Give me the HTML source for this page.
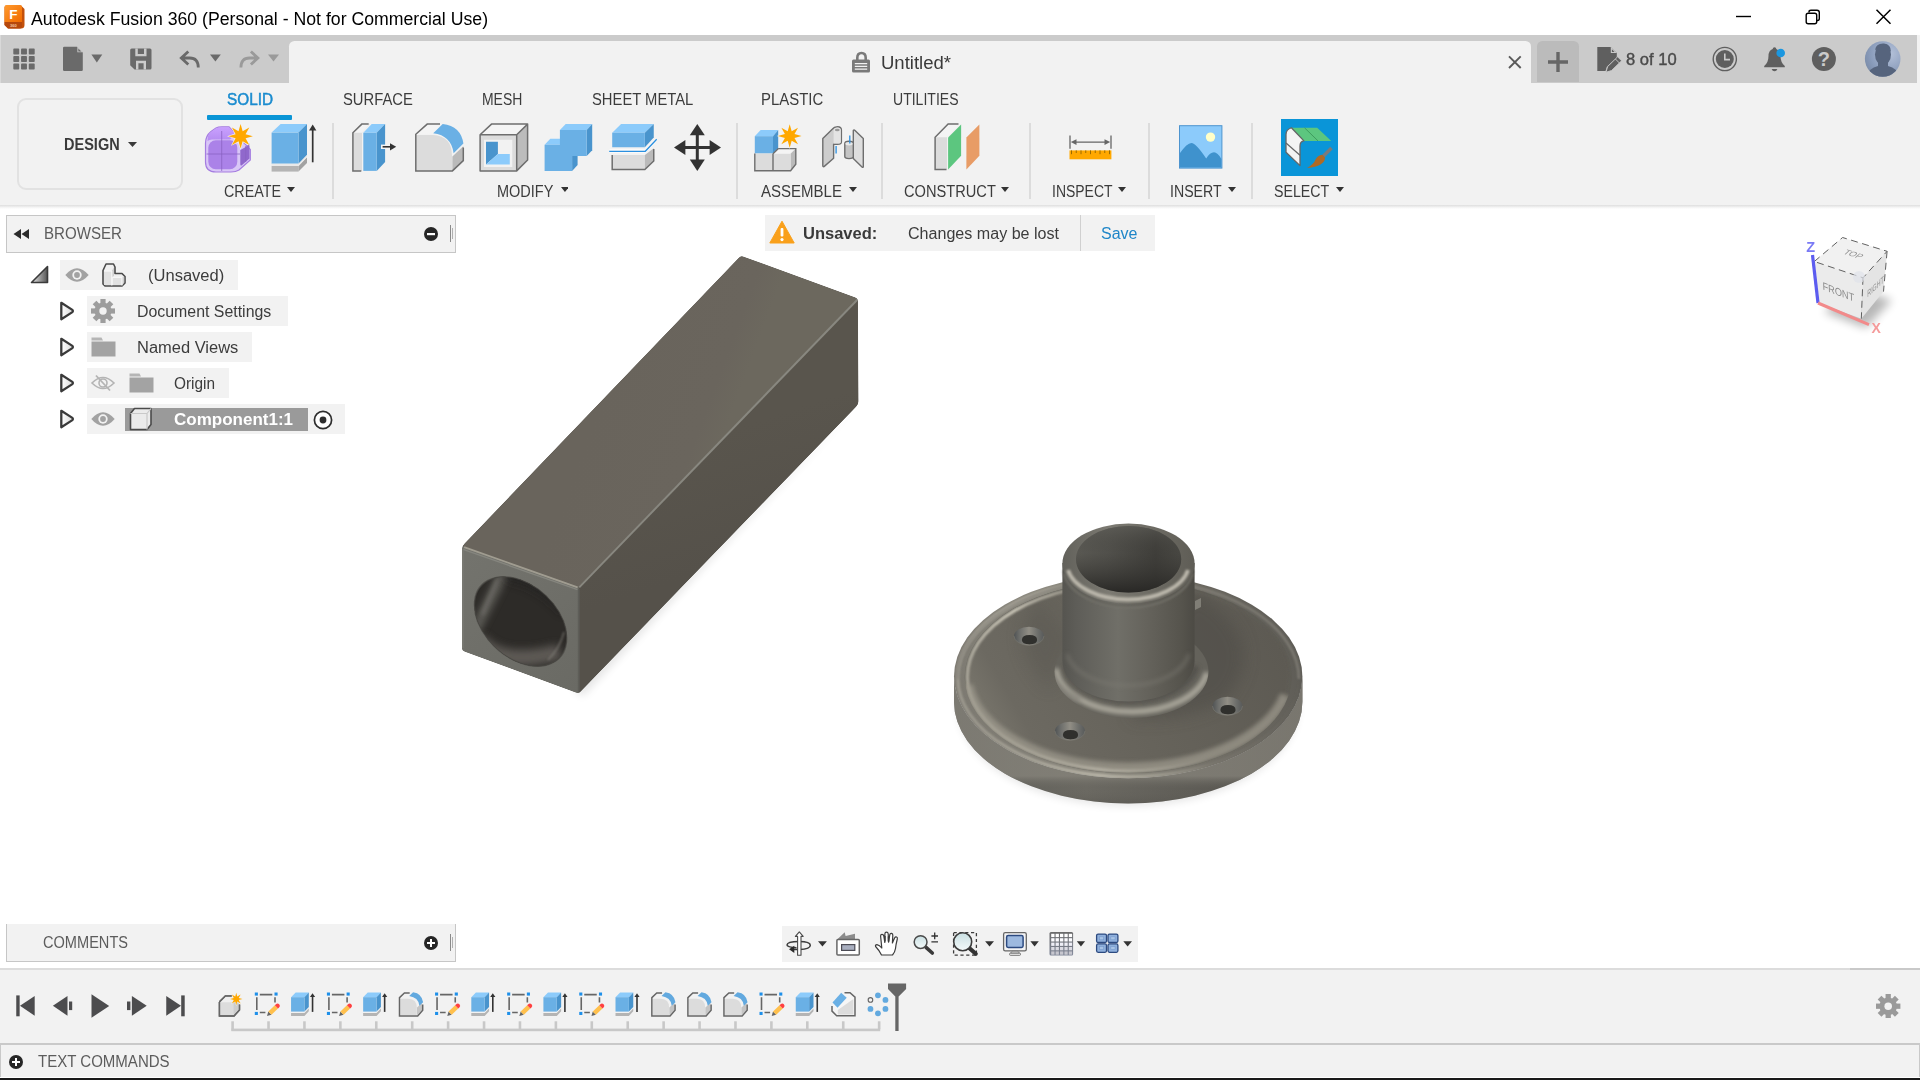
<!DOCTYPE html>
<html><head><meta charset="utf-8"><title>Autodesk Fusion 360</title>
<style>
html,body{margin:0;padding:0;}
body{width:1920px;height:1080px;position:relative;overflow:hidden;background:#fff;font-family:"Liberation Sans",sans-serif;}
.a{position:absolute;display:block;}
.t{position:absolute;display:block;white-space:nowrap;transform-origin:0 0;}
</style></head><body>
<span class="t" style="left:31.00px;top:9.76px;font-size:18px;line-height:18px;color:#000;transform:scaleX(0.9825);">Autodesk Fusion 360 (Personal - Not for Commercial Use)</span>
<div class="a" style="left:0px;top:35px;width:1917px;height:48px;background:#cbcbcb;"></div>
<div class="a" style="left:1917px;top:35px;width:3px;height:48px;background:#f2f2f2;"></div>
<div class="a" style="left:0px;top:35px;width:1px;height:47.5px;background:#d9d9d9;"></div>
<div class="a" style="left:289.2px;top:40.8px;width:1242.3px;height:42.2px;background:#f2f2f2;border-radius:5.5px 5.5px 0 0;"></div>
<div class="a" style="left:1537px;top:40.8px;width:42px;height:41.7px;background:#bbbbbb;border-radius:5.5px 5.5px 0 0;"></div>
<div class="a" style="left:0px;top:82.5px;width:1920px;height:122.5px;background:#f2f2f2;"></div>
<div class="a" style="left:0px;top:205px;width:1920px;height:4px;background:linear-gradient(#dedede,#f4f4f4 60%,#fff);"></div>
<span class="t" style="left:880.80px;top:54.06px;font-size:18px;line-height:18px;color:#3a3a3a;transform:scaleX(1.0289);">Untitled*</span>
<span class="t" style="left:1626.00px;top:51.33px;font-size:16.5px;line-height:16.5px;color:#4a4a4a;transform:scaleX(1.0029);-webkit-text-stroke:0.4px #4a4a4a;">8 of 10</span>
<div class="a" style="left:17px;top:98px;width:162px;height:88px;border:2px solid #e2e2e2;border-radius:9px;"></div>
<span class="t" style="left:63.75px;top:136.76px;font-size:16px;line-height:16px;color:#3a3a3a;font-weight:700;transform:scaleX(0.9072);">DESIGN</span>
<span class="t" style="left:227.00px;top:91.76px;font-size:16px;line-height:16px;color:#1b8ccf;transform:scaleX(0.9580);-webkit-text-stroke:0.5px #1b8ccf;">SOLID</span>
<div class="a" style="left:207px;top:115px;width:85px;height:4.5px;background:#0a95d6;border-radius:1px;"></div>
<span class="t" style="left:342.50px;top:91.76px;font-size:16px;line-height:16px;color:#3c3c3c;transform:scaleX(0.9236);">SURFACE</span>
<span class="t" style="left:482.20px;top:91.76px;font-size:16px;line-height:16px;color:#3c3c3c;transform:scaleX(0.8718);">MESH</span>
<span class="t" style="left:591.50px;top:91.76px;font-size:16px;line-height:16px;color:#3c3c3c;transform:scaleX(0.9238);">SHEET METAL</span>
<span class="t" style="left:761.30px;top:91.76px;font-size:16px;line-height:16px;color:#3c3c3c;transform:scaleX(0.9327);">PLASTIC</span>
<span class="t" style="left:892.50px;top:91.76px;font-size:16px;line-height:16px;color:#3c3c3c;transform:scaleX(0.8771);">UTILITIES</span>
<span class="t" style="left:224.00px;top:183.56px;font-size:16px;line-height:16px;color:#3c3c3c;transform:scaleX(0.8946);">CREATE</span>
<svg class="a" style="left:287px;top:187.3px;" width="8" height="5" viewBox="0 0 8 5"><path d="M0 0H8 L4 5Z" fill="#333"/></svg>
<span class="t" style="left:497.20px;top:183.56px;font-size:16px;line-height:16px;color:#3c3c3c;transform:scaleX(0.9049);">MODIFY</span>
<svg class="a" style="left:560.6px;top:187.3px;" width="7.9" height="5" viewBox="0 0 7.9 5"><path d="M0 0H7.9 L3.95 5Z" fill="#333"/></svg>
<span class="t" style="left:761.30px;top:183.56px;font-size:16px;line-height:16px;color:#3c3c3c;transform:scaleX(0.9390);">ASSEMBLE</span>
<svg class="a" style="left:848.5px;top:187.3px;" width="8" height="5" viewBox="0 0 8 5"><path d="M0 0H8 L4 5Z" fill="#333"/></svg>
<span class="t" style="left:903.75px;top:183.56px;font-size:16px;line-height:16px;color:#3c3c3c;transform:scaleX(0.9145);">CONSTRUCT</span>
<svg class="a" style="left:1001px;top:187.3px;" width="8" height="5" viewBox="0 0 8 5"><path d="M0 0H8 L4 5Z" fill="#333"/></svg>
<span class="t" style="left:1052.20px;top:183.56px;font-size:16px;line-height:16px;color:#3c3c3c;transform:scaleX(0.8732);">INSPECT</span>
<svg class="a" style="left:1118.4px;top:187.3px;" width="8" height="5" viewBox="0 0 8 5"><path d="M0 0H8 L4 5Z" fill="#333"/></svg>
<span class="t" style="left:1170.30px;top:183.56px;font-size:16px;line-height:16px;color:#3c3c3c;transform:scaleX(0.8838);">INSERT</span>
<svg class="a" style="left:1227.5px;top:187.3px;" width="8" height="5" viewBox="0 0 8 5"><path d="M0 0H8 L4 5Z" fill="#333"/></svg>
<span class="t" style="left:1274.00px;top:183.56px;font-size:16px;line-height:16px;color:#3c3c3c;transform:scaleX(0.8885);">SELECT</span>
<svg class="a" style="left:1335.5px;top:187.3px;" width="8" height="5" viewBox="0 0 8 5"><path d="M0 0H8 L4 5Z" fill="#333"/></svg>
<svg class="a" style="left:128px;top:142px;" width="9" height="5" viewBox="0 0 9 5"><path d="M0 0H9 L4.5 5Z" fill="#3a3a3a"/></svg>
<div class="a" style="left:332px;top:123px;width:2px;height:76px;background:#dcdcdc;"></div>
<div class="a" style="left:735.5px;top:123px;width:2px;height:76px;background:#dcdcdc;"></div>
<div class="a" style="left:881px;top:123px;width:2px;height:76px;background:#dcdcdc;"></div>
<div class="a" style="left:1029.25px;top:123px;width:2px;height:76px;background:#dcdcdc;"></div>
<div class="a" style="left:1147.75px;top:123px;width:2px;height:76px;background:#dcdcdc;"></div>
<div class="a" style="left:1251.25px;top:123px;width:2px;height:76px;background:#dcdcdc;"></div>
<div class="a" style="left:6px;top:215px;width:448px;height:36px;border:1px solid #c6c6c6;background:#f2f2f2;"></div>
<span class="t" style="left:43.75px;top:225.71px;font-size:16px;line-height:16px;color:#5c5c5c;transform:scaleX(0.9435);">BROWSER</span>
<svg class="a" style="left:13px;top:229px;" width="17" height="10" viewBox="0 0 17 10"><path d="M8 0V10L0.5 5Z M16 0V10L8.5 5Z" fill="#2b2b2b"/></svg>
<svg class="a" style="left:424px;top:226.5px;" width="14" height="14" viewBox="0 0 14 14"><circle cx="7" cy="7" r="7" fill="#262626"/><rect x="3" y="6" width="8" height="2.2" fill="#fff"/></svg>
<div class="a" style="left:449.5px;top:225px;width:1.2px;height:17px;background:#8a8a8a;"></div>
<div class="a" style="left:452px;top:228px;width:1px;height:11px;background:#b0b0b0;"></div>
<svg class="a" style="left:30px;top:265px;" width="19" height="19" viewBox="0 0 19 19"><defs><linearGradient id="tg" x1="0" y1="0" x2="1" y2="0"><stop offset="0" stop-color="#e8e8e8"/><stop offset="1" stop-color="#555"/></linearGradient></defs><path d="M1.5 17.5 H17.5 V1.5Z" fill="url(#tg)" stroke="#3a3a3a" stroke-width="1.6" stroke-linejoin="round"/></svg>
<div class="a" style="left:60px;top:260px;width:178px;height:30px;background:#f2f2f2;"></div>
<svg class="a" style="left:64.5px;top:267px;" width="24" height="16" viewBox="0 0 24 16"><path d="M0.3 8 Q12 -5.5 23.7 8 Q12 21.5 0.3 8Z" fill="#a2a2a2"/><circle cx="12" cy="8" r="4.7" fill="#f2f2f2"/><circle cx="12" cy="8" r="2.9" fill="#a2a2a2"/></svg>
<svg class="a" style="left:101px;top:262px;" width="26" height="26" viewBox="0 0 26 26"><path d="M2 8.5 L5 2 H12.5 L14 5 V11.5 H21 L24 14.5 V21 L21 24 H4 L2 22Z" fill="#f0f0f0" stroke="#4a4a4a" stroke-width="1.6" stroke-linejoin="round"/><path d="M3 9.3H10.6V23 H3Z M12 15.6H20.8V23H12Z" fill="#e2e2e2"/><path d="M10.8 9 L13 5.3 V14 L10.8 15.5Z M21 15.5 L23.2 14.8 V20.5 L21 23Z" fill="#cfcfcf"/><path d="M3 9H10.8V23.5 M11.5 15.3H21V23.5" fill="none" stroke="#fafafa" stroke-width="1"/></svg>
<span class="t" style="left:147.50px;top:268.36px;font-size:16px;line-height:16px;color:#3c3c3c;transform:scaleX(1.0332);">(Unsaved)</span>
<svg class="a" style="left:58.5px;top:301px;" width="16" height="20" viewBox="0 0 16 20"><defs><linearGradient id="tcg" x1="0" y1="0" x2="1" y2="0"><stop offset="0" stop-color="#fff"/><stop offset="1" stop-color="#d8d8d8"/></linearGradient></defs><path d="M2.3 1.8 L13 8.6 Q14.8 10 13 11.4 L2.3 18.2Z" fill="url(#tcg)" stroke="#3a3a3a" stroke-width="2.3" stroke-linejoin="round"/></svg>
<div class="a" style="left:87px;top:296px;width:201px;height:30px;background:#f2f2f2;"></div>
<svg class="a" style="left:91px;top:299px;" width="24" height="24" viewBox="0 0 24 24"><g transform="translate(12 12)" fill="#9d9d9d"><circle r="8.6"/><rect x="-2.6" y="-12" width="5.2" height="6" transform="rotate(0)"/><rect x="-2.6" y="-12" width="5.2" height="6" transform="rotate(45)"/><rect x="-2.6" y="-12" width="5.2" height="6" transform="rotate(90)"/><rect x="-2.6" y="-12" width="5.2" height="6" transform="rotate(135)"/><rect x="-2.6" y="-12" width="5.2" height="6" transform="rotate(180)"/><rect x="-2.6" y="-12" width="5.2" height="6" transform="rotate(225)"/><rect x="-2.6" y="-12" width="5.2" height="6" transform="rotate(270)"/><rect x="-2.6" y="-12" width="5.2" height="6" transform="rotate(315)"/><circle r="3.7" fill="#f2f2f2"/></g></svg>
<span class="t" style="left:136.75px;top:304.36px;font-size:16px;line-height:16px;color:#3c3c3c;transform:scaleX(0.9932);">Document Settings</span>
<svg class="a" style="left:58.5px;top:337px;" width="16" height="20" viewBox="0 0 16 20"><defs><linearGradient id="tcg" x1="0" y1="0" x2="1" y2="0"><stop offset="0" stop-color="#fff"/><stop offset="1" stop-color="#d8d8d8"/></linearGradient></defs><path d="M2.3 1.8 L13 8.6 Q14.8 10 13 11.4 L2.3 18.2Z" fill="url(#tcg)" stroke="#3a3a3a" stroke-width="2.3" stroke-linejoin="round"/></svg>
<div class="a" style="left:87px;top:332px;width:165px;height:30px;background:#f2f2f2;"></div>
<svg class="a" style="left:91px;top:337px;" width="25" height="20" viewBox="0 0 25 20"><path d="M0.5 0.5H10.5L12 3.5H0.5Z" fill="#b5b5b5"/><rect x="0.5" y="4.5" width="24" height="15" fill="#a3a3a3"/></svg>
<span class="t" style="left:136.75px;top:340.36px;font-size:16px;line-height:16px;color:#3c3c3c;transform:scaleX(1.0289);">Named Views</span>
<svg class="a" style="left:58.5px;top:373px;" width="16" height="20" viewBox="0 0 16 20"><defs><linearGradient id="tcg" x1="0" y1="0" x2="1" y2="0"><stop offset="0" stop-color="#fff"/><stop offset="1" stop-color="#d8d8d8"/></linearGradient></defs><path d="M2.3 1.8 L13 8.6 Q14.8 10 13 11.4 L2.3 18.2Z" fill="url(#tcg)" stroke="#3a3a3a" stroke-width="2.3" stroke-linejoin="round"/></svg>
<div class="a" style="left:87px;top:368px;width:142px;height:30px;background:#f2f2f2;"></div>
<svg class="a" style="left:91px;top:374px;" width="24" height="18" viewBox="0 0 24 18"><path d="M1 9 Q12 -2 23 9 Q12 20 1 9Z" fill="none" stroke="#b4b4b4" stroke-width="1.6"/><circle cx="12" cy="9" r="4" fill="none" stroke="#b4b4b4" stroke-width="1.6"/><path d="M5 1.5 L19 16.5" stroke="#b4b4b4" stroke-width="1.8"/></svg>
<svg class="a" style="left:128.5px;top:373px;" width="25" height="20" viewBox="0 0 25 20"><path d="M0.5 0.5H10.5L12 3.5H0.5Z" fill="#b5b5b5"/><rect x="0.5" y="4.5" width="24" height="15" fill="#a3a3a3"/></svg>
<span class="t" style="left:174.00px;top:376.36px;font-size:16px;line-height:16px;color:#3c3c3c;transform:scaleX(0.9607);">Origin</span>
<svg class="a" style="left:58.5px;top:409px;" width="16" height="20" viewBox="0 0 16 20"><defs><linearGradient id="tcg" x1="0" y1="0" x2="1" y2="0"><stop offset="0" stop-color="#fff"/><stop offset="1" stop-color="#d8d8d8"/></linearGradient></defs><path d="M2.3 1.8 L13 8.6 Q14.8 10 13 11.4 L2.3 18.2Z" fill="url(#tcg)" stroke="#3a3a3a" stroke-width="2.3" stroke-linejoin="round"/></svg>
<div class="a" style="left:87px;top:404px;width:258px;height:30px;background:#f2f2f2;"></div>
<svg class="a" style="left:91px;top:411px;" width="24" height="16" viewBox="0 0 24 16"><path d="M0.3 8 Q12 -5.5 23.7 8 Q12 21.5 0.3 8Z" fill="#a2a2a2"/><circle cx="12" cy="8" r="4.7" fill="#f2f2f2"/><circle cx="12" cy="8" r="2.9" fill="#a2a2a2"/></svg>
<div class="a" style="left:124.5px;top:407.5px;width:183px;height:23px;background:#9a9a9a;"></div>
<svg class="a" style="left:128.5px;top:407px;" width="24" height="24" viewBox="0 0 24 24"><path d="M1.5 6.5 L5.5 1.5 H22 V17.5 L18 22.5 H1.5Z" fill="#ebebeb" stroke="#4a4a4a" stroke-width="1.6" stroke-linejoin="round"/><path d="M1.5 6.5H18V22.5 M18 6.5L22 1.5" fill="none" stroke="#c9c9c9" stroke-width="1.2"/></svg>
<span class="t" style="left:174.00px;top:412.36px;font-size:16px;line-height:16px;color:#fff;font-weight:700;transform:scaleX(1.0626);">Component1:1</span>
<svg class="a" style="left:313px;top:410px;" width="20" height="20" viewBox="0 0 20 20"><circle cx="10" cy="10" r="8.6" fill="#fff" stroke="#2e2e2e" stroke-width="1.7"/><circle cx="10" cy="10" r="3.4" fill="#2e2e2e"/></svg>
<div class="a" style="left:765px;top:215px;width:390px;height:36px;background:#f2f2f2;"></div>
<div class="a" style="left:1079.5px;top:215px;width:1.5px;height:36px;background:#d0d0d0;"></div>
<svg class="a" style="left:769px;top:220px;" width="26" height="24" viewBox="0 0 26 24"><path d="M13 1.2 L25.2 23 H0.8Z" fill="#f9a01b" stroke="#f9a01b" stroke-width="1" stroke-linejoin="round"/><rect x="11.6" y="8" width="2.8" height="8.5" rx="1" fill="#fff"/><circle cx="13" cy="19.6" r="1.6" fill="#fff"/></svg>
<span class="t" style="left:803.20px;top:226.16px;font-size:16px;line-height:16px;color:#3a3a3a;font-weight:700;transform:scaleX(1.0317);">Unsaved:</span>
<span class="t" style="left:908.00px;top:226.16px;font-size:16px;line-height:16px;color:#3c3c3c;transform:scaleX(1.0047);">Changes may be lost</span>
<span class="t" style="left:1100.70px;top:226.16px;font-size:16px;line-height:16px;color:#1f86c8;transform:scaleX(1.0009);">Save</span>
<svg class="a" style="left:0px;top:0px;" width="1920" height="90" viewBox="0 0 1920 90"><defs><linearGradient id="appg" x1="0" y1="0" x2="1" y2="1"><stop offset="0" stop-color="#ff9a2e"/><stop offset="1" stop-color="#f06a00"/></linearGradient></defs>
<path d="M6.5 5.5 H21 L24.5 9 V25 Q24.5 28.5 21 28.5 H8 L4.5 25 V7.5 Q4.5 5.5 6.5 5.5Z" fill="#c4500a"/>
<path d="M6.5 5 H20 Q22 5 22 7 V22 H4.5 V7 Q4.5 5 6.5 5Z" fill="url(#appg)"/>
<path d="M4.5 22 H22 V26.5 Q22 28.5 20 28.5 H8 L4.5 25Z" fill="#b5480c"/>
<text x="9.3" y="19.3" font-family="Liberation Sans, sans-serif" font-weight="700" font-size="13.5" fill="#fff">F</text>
<text x="10" y="27" font-family="Liberation Sans, sans-serif" font-weight="700" font-size="4" fill="#f3c9a6">360</text>
<path d="M1736 16.5H1751" stroke="#000" stroke-width="1.4"/>
<path d="M1809 12.5 V12 Q1809 10.3 1811 10.3 H1817 Q1819.3 10.3 1819.3 12.5 V18.5 Q1819.3 20.5 1817.5 20.5 H1817" fill="none" stroke="#000" stroke-width="1.4"/>
<rect x="1806.2" y="13.2" width="10.5" height="10.5" rx="2" fill="none" stroke="#000" stroke-width="1.4"/>
<path d="M1876.5 9.7 L1890.5 23.7 M1890.5 9.7 L1876.5 23.7" stroke="#000" stroke-width="1.5"/>
<g fill="#6a6a6a"><rect x="13.3" y="48.6" width="5.9" height="5.9" rx="0.8"/><rect x="21.05" y="48.6" width="5.9" height="5.9" rx="0.8"/><rect x="28.8" y="48.6" width="5.9" height="5.9" rx="0.8"/><rect x="13.3" y="56.1" width="5.9" height="5.9" rx="0.8"/><rect x="21.05" y="56.1" width="5.9" height="5.9" rx="0.8"/><rect x="28.8" y="56.1" width="5.9" height="5.9" rx="0.8"/><rect x="13.3" y="63.6" width="5.9" height="5.9" rx="0.8"/><rect x="21.05" y="63.6" width="5.9" height="5.9" rx="0.8"/><rect x="28.8" y="63.6" width="5.9" height="5.9" rx="0.8"/></g>
<path d="M64.2 46.8 H77 L82.8 52.6 V69.8 Q82.8 71 81.6 71 H64.2 Q63 71 63 69.8 V48 Q63 46.8 64.2 46.8Z" fill="#6a6a6a"/><path d="M77.4 46.8 V52.3 H82.8Z" fill="#cbcbcb"/><path d="M78.3 48.6 V51.6 H81.3Z" fill="#6a6a6a"/>
<path d="M91.4 54.4 H102.3 L96.85 62.4Z" fill="#6a6a6a"/>
<path d="M131.7 48.6 H150 Q151.5 48.6 151.5 50.1 V68 Q151.5 69.5 150 69.5 H134.5 L130.2 65.3 V50.1 Q130.2 48.6 131.7 48.6Z" fill="#6a6a6a"/>
<path d="M135.3 48.6 V56.3 H146.5 V48.6 H144 V54 H137.8 V48.6Z" fill="#cbcbcb"/><path d="M136 69.5 V60.8 H146 V69.5 H143.6 V63.2 H138.4 V69.5Z" fill="#cbcbcb"/>
<path d="M8.5 1.5 L1.5 8 L8.5 14.5 M2 8 H10 Q18.5 8 18.5 17.5" transform="translate(179.8 50)" fill="none" stroke="#6a6a6a" stroke-width="2.8" stroke-linejoin="miter"/>
<path d="M210 54.4 H220.8 L215.4 61.6Z" fill="#6a6a6a"/>
<path d="M8.5 1.5 L1.5 8 L8.5 14.5 M2 8 H10 Q18.5 8 18.5 17.5" transform="translate(259.4 50) scale(-1 1)" fill="none" stroke="#9a9a9a" stroke-width="2.8" stroke-linejoin="miter"/>
<path d="M268 54.4 H279 L273.5 61.6Z" fill="#9a9a9a"/>
<path d="M857.3 61 V57.8 Q857.3 53 861.5 53 Q865.7 53 865.7 57.8 V61" fill="none" stroke="#7a7a7a" stroke-width="2.6"/><rect x="852" y="59.6" width="18" height="12.8" rx="1.5" fill="#7a7a7a"/><path d="M854.8 63.6 H867.2 M854.8 66.4 H867.2 M854.8 69.2 H867.2" stroke="#f2f2f2" stroke-width="1.3"/>
<path d="M1509 56.3 L1520.7 68 M1520.7 56.3 L1509 68" stroke="#5a5a5a" stroke-width="1.9"/>
<path d="M1558 52 V72 M1548 62 H1568" stroke="#666" stroke-width="3.4"/>
<path d="M1597.3 47 H1610.6 L1616.8 53 V58 L1607 66.5 L1605.5 71 H1597.3Z" fill="#5f5f5f"/><path d="M1610.8 47 V53 H1616.8Z" fill="#cbcbcb"/><path d="M1611.9 49.3 V52 H1614.6Z" fill="#5f5f5f"/>
<path d="M1617.6 56.8 L1621.6 60.8 L1611.5 70.6 L1606 72.2 L1607.6 66.6Z" fill="#5f5f5f" stroke="#cbcbcb" stroke-width="0.9"/><path d="M1615.4 59 L1619.4 63" stroke="#cbcbcb" stroke-width="0.9"/>
<circle cx="1724.8" cy="59" r="11.6" fill="none" stroke="#5f5f5f" stroke-width="1.4"/><circle cx="1724.8" cy="59" r="9" fill="#5f5f5f"/><path d="M1724.8 53.5 V59.6 H1730" fill="none" stroke="#cbcbcb" stroke-width="1.6"/>
<path d="M1774.5 47.2 Q1776.3 47.2 1776.3 49 Q1780.5 50.5 1780.5 56 Q1780.5 62.5 1784.8 66 V67.2 H1764.2 V66 Q1768.5 62.5 1768.5 56 Q1768.5 50.5 1772.7 49 Q1772.7 47.2 1774.5 47.2Z" fill="#5f5f5f"/><path d="M1771.6 69 H1777.4 Q1776.6 71.3 1774.5 71.3 Q1772.4 71.3 1771.6 69Z" fill="#5f5f5f"/><circle cx="1780.7" cy="53" r="4.3" fill="#1b97e0"/>
<circle cx="1823.9" cy="59" r="12" fill="#5f5f5f"/><text x="1823.9" y="66.3" text-anchor="middle" font-family="Liberation Sans, sans-serif" font-weight="700" font-size="20" fill="#cbcbcb">?</text>
<defs><radialGradient id="avg" cx="0.7" cy="0.35" r="0.9"><stop offset="0" stop-color="#b5c2da"/><stop offset="0.6" stop-color="#8a9cbb"/><stop offset="1" stop-color="#71839f"/></radialGradient><clipPath id="avc"><circle cx="1882.7" cy="59" r="17.8"/></clipPath></defs>
<circle cx="1882.7" cy="59" r="17.8" fill="url(#avg)"/><g clip-path="url(#avc)" fill="#56647d"><ellipse cx="1883" cy="54.5" rx="8" ry="10.5"/><path d="M1878 62 H1888 V66 Q1898 68 1899 78 H1867 Q1868 68 1878 66Z"/><path d="M1875 50 Q1876 43 1884 43.5 Q1891 44 1891 52 L1889 49 L1877 49Z"/></g></svg>
<svg class="a" style="left:0px;top:110px;" width="1920" height="80" viewBox="0 110 1920 80"><defs><linearGradient id="pg" x1="0" y1="0" x2="0" y2="1"><stop offset="0" stop-color="#c9a0ff"/><stop offset="1" stop-color="#b58cf0"/></linearGradient></defs>
<path d="M205.5 143 Q205.5 136 211 131.5 L216 128 Q218 126.8 222 126.8 H229 L250.3 149.5 V160 L239 170 Q236 172 231 172 H216 Q205.5 172 205.5 162Z" fill="#d9c6f7" stroke="#a57de0" stroke-width="1.2"/>
<path d="M209 133.5 L216 128.3 Q218 127.2 222 127.2 H229 L236 134 L230 139.5 H212 Q209 139.5 207.5 141 Q207.5 136 209 133.5Z" fill="url(#pg)"/>
<rect x="208.3" y="140.3" width="29" height="29" rx="7.5" fill="#ab82e8"/>
<path d="M240.3 150 Q246 148 249.5 143.5 V158.5 L241.5 165.5 Q240.3 166 240.3 164Z" fill="#9068cc"/>
<path d="M221.7 131 V171 M206.5 154 H240 M245.7 146 V162" stroke="#8a62c2" stroke-width="1" opacity="0.75" fill="none"/>
<polygon points="240.6,122.8 243.13,130.2 250.15,126.75 246.7,133.77 254.1,136.3 246.7,138.83 250.15,145.85 243.13,142.4 240.6,149.8 238.07,142.4 231.05,145.85 234.5,138.83 227.1,136.3 234.5,133.77 231.05,126.75 238.07,130.2" fill="#f2f2f2" />
<polygon points="240.6,124 242.67,131.31 249.3,127.6 245.59,134.23 252.9,136.3 245.59,138.37 249.3,145 242.67,141.29 240.6,148.6 238.53,141.29 231.9,145 235.61,138.37 228.3,136.3 235.61,134.23 231.9,127.6 238.53,131.31" fill="#ffa800" />
<polygon points="271.6,132.6 280.6,124.1 307,124.1 298.5,132.6" fill="#8ccbfb" />
<polygon points="298.5,132.6 307,124.1 307,154.9 298.5,163.7" fill="#4994cd" />
<polygon points="271.6,132.6 298.5,132.6 298.5,163.7 271.6,163.7" fill="#6ab0e5" />
<polygon points="271.6,165.9 298.5,165.9 298.5,171.6 271.6,171.6" fill="#b4b4b4" />
<polygon points="298.5,165.9 307,157.2 307,163 298.5,171.6" fill="#a2a2a2" />
<polygon points="271.6,163.7 298.5,163.7 307,154.9 307,157.2 298.5,165.9 271.6,165.9" fill="#e9e9e9" />
<path d="M312.7 128 V162.3" stroke="#333" stroke-width="1.7"/><path d="M309 130.6 L312.7 124.6 L316.4 130.6Z" fill="#333"/>
<polygon points="352.9,132.8 361.8,124.1 370,124.1 362,132.8 362,170.9 352.9,170.9" fill="#dcdcdc" />
<polygon points="352.9,132.8 361.8,124.1 370,124.1 362,132.8" fill="#f4f4f4" />
<path d="M368.7 124.1 H361.8 L352.9 132.8 V170.9 H361.3" fill="none" stroke="#6e6e6e" stroke-width="1.5"/>
<polygon points="363.3,132.8 371.7,124.1 385.1,124.1 376.7,132.8" fill="#8ccbfb" />
<polygon points="376.7,132.8 385.1,124.1 385.1,162 376.7,170.9" fill="#4994cd" />
<polygon points="363.3,132.8 376.7,132.8 376.7,170.9 363.3,170.9" fill="#6ab0e5" />
<rect x="381" y="144.6" width="9" height="4.4" fill="#f2f2f2"/><path d="M382.6 146.8 H391" stroke="#333" stroke-width="1.6"/><path d="M390 143.2 L396.2 146.8 L390 150.4Z" fill="#333"/>
<polygon points="415.8,134.3 427.2,124.1 441,124.1 434,133.5" fill="#f4f4f4" />
<path d="M415.8 135 H433 Q452 136 452 156 V170.9 H415.8Z" fill="#dcdcdc"/>
<polygon points="452.4,156.5 463.3,146.2 463.3,160.6 452.4,170.9" fill="#bababa" />
<path d="M433.2 133.2 L442.7 123.9 Q461 126 463.4 143.6 L453.6 153.2 Q451.5 135.5 433.2 133.2Z" fill="#6ab0e5"/>
<path d="M440 124.1 H427.2 L415.8 134.3 V170.9 H452.4 L463.3 160.6 V147.5" fill="none" stroke="#6e6e6e" stroke-width="1.5"/>
<polygon points="480.1,134.8 491.5,124.1 527.6,124.1 516.7,134.8" fill="#f4f4f4" />
<polygon points="516.7,134.8 527.6,124.1 527.6,160 516.7,170.9" fill="#bcbcbc" />
<polygon points="480.1,134.8 516.7,134.8 516.7,170.9 480.1,170.9" fill="#dcdcdc" />
<rect x="484" y="139.8" width="28.3" height="27.2" fill="#f2f2f2"/>
<polygon points="486,141.8 497.9,141.8 497.9,154.1 486,164.5" fill="#4994cd" />
<polygon points="486,164.5 497.9,154.1 509.8,154.1 509.8,164.5" fill="#8ccbfb" />
<path d="M480.1 134.8 L491.5 124.1 H527.6 V160 L516.7 170.9 H480.1Z M480.1 134.8 H516.7 V170.9 M516.7 134.8 L527.6 124.1" fill="none" stroke="#6e6e6e" stroke-width="1.5" stroke-linejoin="round"/>
<polygon points="559.9,129.9 565.7,123.9 592.2,123.9 586.7,129.9" fill="#8ccbfb" />
<polygon points="586.7,129.9 592.2,123.9 592.2,150.2 586.7,155.9" fill="#4994cd" />
<polygon points="544.6,144.7 550.3,138.8 560.5,138.8 560.5,144.7" fill="#8ccbfb" />
<polygon points="572.1,155.9 577.6,155.9 577.6,165 572.1,170.9" fill="#4994cd" />
<polygon points="559.9,129.9 586.7,129.9 586.7,155.9 572.1,155.9 572.1,170.9 544.6,170.9 544.6,144.7 559.9,144.7" fill="#6ab0e5" />
<polygon points="612.2,132.8 621.1,123.9 653.75,123.9 644.85,132.8" fill="#8ccbfb" />
<polygon points="644.85,132.8 653.75,123.9 653.75,137.6 644.85,147.2" fill="#4994cd" />
<polygon points="612.2,132.8 644.85,132.8 644.85,147.2 612.2,147.2" fill="#6ab0e5" />
<polygon points="609.5,149 645,149 656.3,137.5 656.7,141 645.6,153 609.5,153" fill="#fafafa" />
<path d="M609.2 151.3 H645.3 L656.7 139.3" fill="none" stroke="#2b90e0" stroke-width="1.3"/>
<polygon points="612.2,155.1 644.85,155.1 644.85,169.5 612.2,169.5" fill="#dcdcdc" />
<polygon points="644.85,155.1 653.75,148.2 653.75,161 644.85,169.5" fill="#bababa" />
<path d="M612.2 155.1 V169.5 H644.85 L653.75 161 V149" fill="none" stroke="#6e6e6e" stroke-width="1.5"/>
<path d="M697.3 133 V162 M683 147.5 H712" stroke="#333" stroke-width="3"/>
<polygon points="697.3,123.9 704.8,135.3 689.8,135.3" fill="#333" />
<polygon points="697.3,170.9 704.8,159.6 689.8,159.6" fill="#333" />
<polygon points="674,147.5 685.4,140 685.4,155" fill="#333" />
<polygon points="721,147.5 709.6,140 709.6,155" fill="#333" />
<polygon points="754.8,136.2 760.6,130 778.2,130 773,136.2" fill="#8ccbfb" />
<polygon points="773,136.2 778.2,130 778.2,148.3 773,153.5" fill="#4994cd" />
<polygon points="754.8,136.2 773,136.2 773,153.5 754.8,153.5" fill="#6ab0e5" />
<polygon points="754.8,153.5 773,153.5 773,170.7 754.8,170.7" fill="#dcdcdc" />
<polygon points="773,153.8 778.4,148.6 795.8,148.6 790.6,153.8" fill="#f4f4f4" />
<polygon points="790.6,153.8 795.8,148.6 795.8,164.2 790.6,170.7" fill="#bababa" />
<polygon points="773,153.8 790.6,153.8 790.6,170.7 773,170.7" fill="#dcdcdc" />
<path d="M754.8 153.5 V170.7 H790.6 L795.8 164.2 V148.6 H778.4 M773 153.8 V170.7 M773 153.8 L778.4 148.6" fill="none" stroke="#6e6e6e" stroke-width="1.4"/>
<polygon points="789.7,123 792.11,130.18 798.89,126.81 795.52,133.59 802.7,136 795.52,138.41 798.89,145.19 792.11,141.82 789.7,149 787.29,141.82 780.51,145.19 783.88,138.41 776.7,136 783.88,133.59 780.51,126.81 787.29,130.18" fill="#f2f2f2" />
<polygon points="789.7,124.2 791.69,131.2 798.04,127.66 794.5,134.01 801.5,136 794.5,137.99 798.04,144.34 791.69,140.8 789.7,147.8 787.71,140.8 781.36,144.34 784.9,137.99 777.9,136 784.9,134.01 781.36,127.66 787.71,131.2" fill="#ffa800" />
<path d="M822.8 138.5 L832.5 129 Q834 126.8 837.5 126.8 Q841.4 126.8 841.4 130 V142 Q841.4 144.3 837.5 144.3 H833.6 V158.2 L824 166.6 Q822.8 167 822.8 165.5Z" fill="#cdcdcd" stroke="#6e6e6e" stroke-width="1.4" stroke-linejoin="round"/>
<path d="M833.6 131 Q833.6 127.5 837.5 127.5 Q840.8 127.5 840.8 130 V142 Q840.8 143.6 837.5 143.6 H833.6Z" fill="#e4e4e4"/><ellipse cx="837.3" cy="130" rx="2.4" ry="1.2" fill="#9a9a9a"/>
<path d="M853.3 130.5 Q854 129.5 855 130.5 L863.3 138.5 V166.5 Q863.3 168 862 167 L853.3 158.6Z" fill="#dedede" stroke="#6e6e6e" stroke-width="1.4" stroke-linejoin="round"/>
<path d="M844.8 143.5 Q844.8 141.3 849 141.3 Q853.3 141.3 853.3 143.5 V156.5 Q853.3 158.6 849 158.6 Q844.8 158.6 844.8 156.5Z" fill="#c4c4c4" stroke="#6e6e6e" stroke-width="1.4"/>
<ellipse cx="849" cy="143.8" rx="3.6" ry="1.7" fill="#e8e8e8"/>
<path d="M836.1 146 V153.4 M849.8 135.6 V143.4" stroke="#2b90e0" stroke-width="1.3"/>
<polygon points="935.1,137.3 948.1,123.9 959.5,123.9 947,137.3" fill="#f4f4f4" />
<polygon points="935.1,137.3 947,137.3 947,169.4 935.1,169.4" fill="#dcdcdc" />
<path d="M958.5 123.9 H948.1 L935.1 137.3 V169.4 H946.5" fill="none" stroke="#6e6e6e" stroke-width="1.5"/>
<polygon points="948.1,137.5 961.1,124.5 961.1,155.8 948.1,169.6" fill="#5cc67f" />
<polygon points="966.4,137.5 979.4,124.5 979.4,155.8 966.4,169.6" fill="#e89c66" />
<rect x="1069.5" y="150.4" width="41.9" height="8.9" fill="#ffa800"/>
<path d="M1071.5 150.4 V154.2 M1076.25 150.4 V153 M1081 150.4 V154.2 M1085.75 150.4 V153 M1090.5 150.4 V154.2 M1095.25 150.4 V153 M1100 150.4 V154.2 M1104.75 150.4 V153 M1109.5 150.4 V154.2" stroke="#9a6b00" stroke-width="1"/>
<path d="M1070 135.6 V148.7 M1111 135.6 V148.7 M1073 142.1 H1108" stroke="#666" stroke-width="1.3"/>
<polygon points="1070.8,142.1 1076.5,139.2 1076.5,145" fill="#666" />
<polygon points="1110.2,142.1 1104.5,139.2 1104.5,145" fill="#666" />
<rect x="1179.5" y="125.7" width="42.4" height="42.4" fill="#8ccbfb" stroke="#4d94cf" stroke-width="1"/>
<path d="M1180 153 Q1187 143 1191.4 142.9 Q1196 143 1206.2 158.5 Q1210 152.3 1214 152.3 Q1217.5 152.3 1221.4 159 V167.6 H1180Z" fill="#3f92cd"/>
<circle cx="1210.5" cy="137.1" r="4.7" fill="#ffffc8"/>
<rect x="1281" y="119" width="57" height="57" fill="#0a95d8"/>
<polygon points="1291.4,127.75 1317.2,127.75 1331.25,140.9 1303.9,140.9" fill="#5cc67f" />
<path d="M1304.5 127.75 L1318 140.9" stroke="#3f9c5e" stroke-width="1"/>
<path d="M1291.4 127.75 Q1286 129.5 1286 134.5 V152.3 L1300 165.6 V146 Q1300 141.5 1303.9 140.9Z" fill="#f4f4f4" stroke="#666" stroke-width="1.3" stroke-linejoin="round"/>
<path d="M1286 143 L1300 155.3" stroke="#666" stroke-width="1.2"/>
<path d="M1331.5 148 L1323.5 156" stroke="#7b7b7b" stroke-width="3.4"/>
<path d="M1322.3 154.7 L1325 157.4 Q1325 166 1307 168 Q1314 164 1315.5 159.5 Q1317.5 155.3 1322.3 154.7Z" fill="#b06a24"/></svg>
<svg class="a" style="left:0px;top:0px;" width="1920" height="1080" viewBox="0 0 1920 1080"><defs>
<linearGradient id="bTop" gradientUnits="userSpaceOnUse" x1="600" y1="400" x2="720" y2="445"><stop offset="0" stop-color="#69645c"/><stop offset="0.8" stop-color="#6a655d"/><stop offset="1" stop-color="#6c685e"/></linearGradient>
<linearGradient id="bRight" gradientUnits="userSpaceOnUse" x1="700" y1="440" x2="740" y2="560"><stop offset="0" stop-color="#59554d"/><stop offset="1" stop-color="#55514a"/></linearGradient>
<linearGradient id="bFront" gradientUnits="userSpaceOnUse" x1="463" y1="560" x2="578" y2="690"><stop offset="0" stop-color="#73736d"/><stop offset="1" stop-color="#6a6a64"/></linearGradient>
<linearGradient id="bHole" gradientUnits="userSpaceOnUse" x1="478" y1="640" x2="566" y2="600"><stop offset="0" stop-color="#4a4844"/><stop offset="0.14" stop-color="#6f6e69"/><stop offset="0.3" stop-color="#45433f"/><stop offset="0.6" stop-color="#2f2d2a"/><stop offset="1" stop-color="#2a2825"/></linearGradient>
<linearGradient id="bHole2" gradientUnits="userSpaceOnUse" x1="520" y1="600" x2="535" y2="668"><stop offset="0" stop-color="#2a2825" stop-opacity="0"/><stop offset="0.55" stop-color="#4a4742" stop-opacity="0.3"/><stop offset="1" stop-color="#66635d" stop-opacity="0.85"/></linearGradient>
<filter id="blur2" filterUnits="userSpaceOnUse" x="930" y="500" width="400" height="330"><feGaussianBlur stdDeviation="2"/></filter>
<filter id="blur1" filterUnits="userSpaceOnUse" x="930" y="500" width="400" height="330"><feGaussianBlur stdDeviation="1"/></filter>
<filter id="blur4" filterUnits="userSpaceOnUse" x="930" y="500" width="400" height="330"><feGaussianBlur stdDeviation="4"/></filter>
<filter id="blur8" filterUnits="userSpaceOnUse" x="930" y="500" width="400" height="330"><feGaussianBlur stdDeviation="8"/></filter>
<filter id="hb1" filterUnits="userSpaceOnUse" x="440" y="240" width="460" height="480"><feGaussianBlur stdDeviation="1"/></filter>
<filter id="hb2" filterUnits="userSpaceOnUse" x="440" y="240" width="460" height="480"><feGaussianBlur stdDeviation="2"/></filter>
<filter id="hb4" filterUnits="userSpaceOnUse" x="440" y="240" width="460" height="480"><feGaussianBlur stdDeviation="4"/></filter>
</defs>
<path d="M859.8 402 L582.6 696.5 L572.6 688.5 Z" fill="#000" opacity="0.10" filter="url(#hb4)"/>
<clipPath id="boxclip"><path d="M738.58 257.91 Q740.80 255.60 743.81 256.70 L854.99 297.30 Q858.00 298.40 858.01 301.60 L858.39 401.30 Q858.40 404.50 856.17 406.80 L580.83 691.40 Q578.60 693.70 575.60 692.59 L465.00 651.71 Q462.00 650.60 462.00 647.40 L462.00 549.20 Q462.00 546.00 464.22 543.69 Z"/></clipPath>
<g clip-path="url(#boxclip)">
<path d="M738.58 257.91 Q740.80 255.60 743.81 256.70 L854.99 297.30 Q858.00 298.40 858.01 301.60 L858.39 401.30 Q858.40 404.50 856.17 406.80 L580.83 691.40 Q578.60 693.70 575.60 692.59 L465.00 651.71 Q462.00 650.60 462.00 647.40 L462.00 549.20 Q462.00 546.00 464.22 543.69 Z" fill="#5e5b54"/>
<path d="M740.8 255.6 L857.6 298.4 L578.6 587 L462.6 546Z" fill="url(#bTop)"/>
<path d="M857.6 298.4 L858.8 404 L578.6 693.5 L578.6 587Z" fill="url(#bRight)"/>
<path d="M461.6 546 L578.6 587 L578.6 693.5 L461.6 650.5Z" fill="url(#bFront)"/>
<path d="M857.3 299.7 L579.2 587.4" stroke="#8c8b83" stroke-width="2" opacity="0.95"/>
<path d="M464.1 547.2 L577.6 587.3" stroke="#a09c90" stroke-width="1.8"/>
<path d="M463.1 549.4 L577.6 589.6" stroke="#85857e" stroke-width="1.4"/>
<path d="M578.8 589 L578.8 691.5" stroke="#5d5d58" stroke-width="2" opacity="0.8"/>
<path d="M462.9 549 L462.9 648" stroke="#7c7c76" stroke-width="1.4" opacity="0.9"/>
<g transform="matrix(116 41 0 104.75 520.6 621.475)"><circle r="0.398" fill="#2c2a27"/></g>
<clipPath id="hclip"><circle r="0.398" transform="matrix(116 41 0 104.75 520.6 621.475)"/></clipPath>
<g clip-path="url(#hclip)"><rect x="460" y="560" width="120" height="120" fill="#2d2b28"/><path d="M505 570 L470 640" stroke="#75736d" stroke-width="9" fill="none" opacity="0.8" filter="url(#hb4)"/><path d="M498 578 L482 615" stroke="#8a8882" stroke-width="3" fill="none" opacity="0.55" filter="url(#hb2)"/><path d="M478 640 Q500 668 560 652" stroke="#67645e" stroke-width="16" fill="none" opacity="0.85" filter="url(#hb4)"/><path d="M505 575 Q540 580 566 610" stroke="#242220" stroke-width="12" fill="none" opacity="0.6" filter="url(#hb4)"/><path d="M548 660 Q560 648 564 632" stroke="#8a8780" stroke-width="1.6" fill="none" opacity="0.6" filter="url(#hb1)"/></g>
<g transform="matrix(116 41 0 104.75 520.6 621.475)"><circle r="0.398" fill="none" stroke="#4a4945" stroke-width="0.012" opacity="0.7"/></g>
</g></svg>
<svg class="a" style="left:0px;top:0px;" width="1920" height="1080" viewBox="0 0 1920 1080"><defs>
<linearGradient id="fSide" gradientUnits="userSpaceOnUse" x1="954" y1="0" x2="1302" y2="0"><stop offset="0" stop-color="#5b5a55"/><stop offset="0.15" stop-color="#63625c"/><stop offset="0.38" stop-color="#6b6962"/><stop offset="0.7" stop-color="#5e5c56"/><stop offset="1" stop-color="#514f4a"/></linearGradient>
<linearGradient id="fSideV" gradientUnits="userSpaceOnUse" x1="0" y1="776" x2="0" y2="804"><stop offset="0" stop-color="#8a877e" stop-opacity="0.7"/><stop offset="0.45" stop-color="#6a6861" stop-opacity="0"/><stop offset="1" stop-color="#4e4c47" stop-opacity="0.35"/></linearGradient>
<linearGradient id="fBead" gradientUnits="userSpaceOnUse" x1="960" y1="740" x2="1300" y2="640"><stop offset="0" stop-color="#7b7870"/><stop offset="0.35" stop-color="#8b887e"/><stop offset="0.7" stop-color="#706d65"/><stop offset="1" stop-color="#5d5b55"/></linearGradient>
<linearGradient id="fTop" gradientUnits="userSpaceOnUse" x1="1000" y1="770" x2="1280" y2="610"><stop offset="0" stop-color="#7c796f"/><stop offset="0.14" stop-color="#6c6961"/><stop offset="0.5" stop-color="#65625a"/><stop offset="1" stop-color="#5c5952"/></linearGradient>
<linearGradient id="fTube" gradientUnits="userSpaceOnUse" x1="1063" y1="0" x2="1194" y2="0"><stop offset="0" stop-color="#565550"/><stop offset="0.1" stop-color="#5e5d58"/><stop offset="0.42" stop-color="#706f68"/><stop offset="0.62" stop-color="#66645d"/><stop offset="0.9" stop-color="#56544d"/><stop offset="1" stop-color="#4d4b45"/></linearGradient>
<linearGradient id="fIn" gradientUnits="userSpaceOnUse" x1="1076" y1="0" x2="1182" y2="0"><stop offset="0" stop-color="#5f5e58"/><stop offset="0.3" stop-color="#55544f"/><stop offset="0.75" stop-color="#403f3b"/><stop offset="1" stop-color="#4b4a45"/></linearGradient>
<linearGradient id="fIn2" gradientUnits="userSpaceOnUse" x1="0" y1="526" x2="0" y2="593"><stop offset="0" stop-color="#62615b" stop-opacity="0.6"/><stop offset="0.4" stop-color="#3a3935" stop-opacity="0.15"/><stop offset="1" stop-color="#262523" stop-opacity="0.95"/></linearGradient>
<linearGradient id="fRim" gradientUnits="userSpaceOnUse" x1="1063" y1="0" x2="1194" y2="0"><stop offset="0" stop-color="#62615b"/><stop offset="0.35" stop-color="#7c7a72"/><stop offset="1" stop-color="#5f5d56"/></linearGradient>
<clipPath id="discClip"><ellipse cx="1128.2" cy="676.5" rx="174.2" ry="101.8"/></clipPath>
<clipPath id="topClip"><ellipse cx="1128.2" cy="677" rx="163.5" ry="96"/></clipPath>
</defs>
<ellipse cx="1128.2" cy="708" rx="170" ry="98" fill="#000" opacity="0.10" filter="url(#blur4)"/>
<path d="M954 676.5 A174.2 101.8 0 0 0 1302.4 676.5 V701.7 A174.2 101.8 0 0 1 954 701.7Z" fill="url(#fSide)"/>
<path d="M954 676.5 A174.2 101.8 0 0 0 1302.4 676.5 V701.7 A174.2 101.8 0 0 1 954 701.7Z" fill="url(#fSideV)"/>
<ellipse cx="1128.2" cy="676.5" rx="174.2" ry="101.8" fill="url(#fBead)"/>
<g clip-path="url(#discClip)">
<ellipse cx="1128.2" cy="677.5" rx="170.5" ry="99.3" fill="none" stroke="url(#hlg)" stroke-width="3.2" opacity="0.75" filter="url(#blur1)"/>
<path d="M957 684 A171 100 0 0 1 1299 684" fill="none" stroke="#85827a" stroke-width="2.5" opacity="0.8" filter="url(#blur1)" transform="translate(0,-5)"/>
</g>
<ellipse cx="1128.2" cy="677" rx="163.5" ry="96" fill="url(#fTop)"/>
<g clip-path="url(#topClip)">
<ellipse cx="1128.2" cy="677" rx="163.5" ry="96" fill="none" stroke="#5f5d56" stroke-width="3" opacity="0.7" filter="url(#blur1)"/>
<defs><linearGradient id="hlg" gradientUnits="userSpaceOnUse" x1="1290" y1="640" x2="1010" y2="790"><stop offset="0" stop-color="#c8c4b6" stop-opacity="0"/><stop offset="0.4" stop-color="#c8c4b6" stop-opacity="0.12"/><stop offset="0.72" stop-color="#c8c4b6" stop-opacity="1"/><stop offset="1" stop-color="#c8c4b6" stop-opacity="0.55"/></linearGradient></defs>
<ellipse cx="1128.2" cy="677" rx="161" ry="93.8" fill="none" stroke="url(#hlg)" stroke-width="3.4" filter="url(#blur1)"/>
<path d="M968 690 A161 93 0 0 0 1285 700" fill="none" stroke="#a09c90" stroke-width="10" opacity="0.7" filter="url(#blur2)" transform="translate(0,-5)"/>
<path d="M1192 590 Q1275 640 1225 700 Q1185 722 1130 718 Z" fill="#4c4a45" opacity="0.5" filter="url(#blur8)"/>
<path d="M1040 600 Q1000 640 1050 690 L1070 640Z" fill="#55534e" opacity="0.35" filter="url(#blur8)"/>
</g>
<defs><linearGradient id="hg" gradientUnits="userSpaceOnUse" x1="-15" y1="0" x2="15" y2="0"><stop offset="0" stop-color="#505354"/><stop offset="0.2" stop-color="#6e6f6c"/><stop offset="0.5" stop-color="#918e85"/><stop offset="0.8" stop-color="#6c6d6a"/><stop offset="1" stop-color="#585a5a"/></linearGradient></defs>
<ellipse cx="0" cy="0" rx="15" ry="9.3" fill="url(#hg)" transform="translate(1029 636)"/><path d="M-7.6 4 Q-7.6 -1 0 -1 Q7.6 -1 7.6 4 Q7.6 8.2 0 8.4 Q-7.6 8.2 -7.6 4Z" fill="#30302d" transform="translate(1029.5 636)"/><path d="M-15 0 A15 9.3 0 0 0 15 0" fill="none" stroke="#7b7971" stroke-width="1" opacity="0.6" transform="translate(1029 636)"/>
<ellipse cx="0" cy="0" rx="15" ry="9.3" fill="url(#hg)" transform="translate(1227.5 706)"/><path d="M-7.6 4 Q-7.6 -1 0 -1 Q7.6 -1 7.6 4 Q7.6 8.2 0 8.4 Q-7.6 8.2 -7.6 4Z" fill="#30302d" transform="translate(1228 706)"/><path d="M-15 0 A15 9.3 0 0 0 15 0" fill="none" stroke="#7b7971" stroke-width="1" opacity="0.6" transform="translate(1227.5 706)"/>
<ellipse cx="0" cy="0" rx="15" ry="9.3" fill="url(#hg)" transform="translate(1070 731)"/><path d="M-7.6 4 Q-7.6 -1 0 -1 Q7.6 -1 7.6 4 Q7.6 8.2 0 8.4 Q-7.6 8.2 -7.6 4Z" fill="#30302d" transform="translate(1070.5 731)"/><path d="M-15 0 A15 9.3 0 0 0 15 0" fill="none" stroke="#7b7971" stroke-width="1" opacity="0.6" transform="translate(1070 731)"/>
<path d="M1195 601 l6 -3 v9 l-6 3z" fill="#807e76"/>
<ellipse cx="1131.5" cy="671.5" rx="77" ry="46.5" fill="#64625b"/>
<clipPath id="filClip"><ellipse cx="1131.5" cy="671.5" rx="77" ry="46.5"/></clipPath>
<g clip-path="url(#filClip)">
<path d="M1056 668 A76 46 0 0 0 1207 672" fill="none" stroke="#aaa79b" stroke-width="6" opacity="1" filter="url(#blur2)" transform="translate(0,0.5)"/>
<path d="M1060 640 A74 44 0 0 0 1080 700" fill="none" stroke="#85827a" stroke-width="7" opacity="0.7" filter="url(#blur2)"/>
<path d="M1066 668 A66 40 0 0 0 1196 668" fill="none" stroke="#4d4b46" stroke-width="6" opacity="0.75" filter="url(#blur2)" transform="translate(0,-2)"/>
</g>
<path d="M1062.4 563 V661 A66.1 40.5 0 0 0 1194.6 661 V563Z" fill="url(#fTube)"/>
<path d="M1067 654 A62 38.5 0 0 0 1189 654" fill="none" stroke="#7f7d75" stroke-width="3" opacity="0.55" filter="url(#blur2)"/>
<path d="M1063.5 575 A65 40 0 0 0 1193 575" fill="none" stroke="#55534d" stroke-width="2.5" opacity="0.55" filter="url(#blur1)" transform="translate(0,-5)"/>
<path d="M1064 575 A65 40 0 0 0 1192.5 575" fill="none" stroke="#7d7b73" stroke-width="2.5" opacity="0.6" filter="url(#blur1)" transform="translate(0,-1.5)"/>
<ellipse cx="1128.5" cy="563.6" rx="66.1" ry="40" fill="url(#fRim)"/>
<path d="M1068 572 A61 36 0 0 0 1188 572" fill="none" stroke="#bab6aa" stroke-width="4" opacity="1" filter="url(#blur1)" transform="translate(0,-2)"/>
<ellipse cx="1128.6" cy="559.2" rx="52.6" ry="33.3" fill="url(#fIn)"/>
<ellipse cx="1128.6" cy="559.2" rx="52.6" ry="33.3" fill="url(#fIn2)"/></svg>
<div class="a" style="left:6px;top:924px;width:448px;height:37px;border:1px solid #c6c6c6;border-top:none;background:#f2f2f2;"></div>
<span class="t" style="left:43.30px;top:935.46px;font-size:16px;line-height:16px;color:#5c5c5c;transform:scaleX(0.9108);">COMMENTS</span>
<svg class="a" style="left:424px;top:935.5px;" width="14" height="14" viewBox="0 0 14 14"><circle cx="7" cy="7" r="7" fill="#262626"/><path d="M3 7H11M7 3V11" stroke="#fff" stroke-width="2"/></svg>
<div class="a" style="left:449.5px;top:934px;width:1.2px;height:17px;background:#8a8a8a;"></div>
<div class="a" style="left:452px;top:937px;width:1px;height:11px;background:#b0b0b0;"></div>
<div class="a" style="left:782px;top:926px;width:356px;height:36px;background:#f2f2f2;"></div>
<svg class="a" style="left:770px;top:920px;" width="380" height="50" viewBox="770 920 380 50"><path d="M796.5 947.8 Q787 947 787 945 Q787 941.5 799.2 941.5 Q810.3 941.5 810.3 945.3 Q810.3 949.3 799.5 949.5 L793 949.5" fill="none" stroke="#3c3c3c" stroke-width="1.5"/>
<path d="M789 949.3 L794.3 945.7 V953Z" fill="#2b2b2b"/>
<path d="M799.3 931.8 L803.2 936.4 H801 V955.2 H797.6 V936.4 H795.4Z" fill="#fff" stroke="#4a4a4a" stroke-width="1.1" stroke-linejoin="round"/>
<path d="M818 941.2 H826.9 L822.45 946.6Z" fill="#333"/>
<path d="M837.4 939.3 L844.7 932.3 L845.6 936 L855 933.7 V939.3Z" fill="#8c8c8c"/>
<rect x="836.9" y="939.6" width="22.4" height="15.4" rx="1" fill="#fff" stroke="#666" stroke-width="1.5"/>
<rect x="841.6" y="944.6" width="13.2" height="5.8" fill="#a9afc0" stroke="#4c4c55" stroke-width="1.2"/>
<path d="M881.5 955 Q879 950 875.6 946.5 Q875 944.8 877 944.6 Q879.5 945 881.8 948 L880.6 936 Q880.6 934.3 882 934.3 Q883.4 934.3 883.8 936 L884.8 942.5 L884.9 933.8 Q885 932.2 886.5 932.2 Q888 932.2 888.2 933.8 L888.6 942.2 L889.8 934.6 Q890.1 933.1 891.5 933.3 Q892.9 933.5 892.8 935.2 L892.4 943 L894.7 937.8 Q895.4 936.5 896.6 937 Q897.7 937.5 897.3 939 Q895.8 945 895.5 948.5 Q895 952 892.5 955Z" fill="#fff" stroke="#3c3c3c" stroke-width="1.2" stroke-linejoin="round"/>
<path d="M884.9 941.5 V936 M888.5 941.5 V936.5" stroke="#3c3c3c" stroke-width="1.6"/>
<defs><linearGradient id="lens" x1="0" y1="0" x2="0" y2="1"><stop offset="0" stop-color="#c9dfe2"/><stop offset="1" stop-color="#f4fafa"/></linearGradient></defs>
<path d="M926 947.3 L932.3 953" stroke="#3a3a3a" stroke-width="3.6" stroke-linecap="round"/>
<circle cx="920.6" cy="942.1" r="6.4" fill="url(#lens)" stroke="#4a4a4a" stroke-width="1.5"/>
<path d="M934.7 932.6 V939.2 M931.4 936 H938 M931.4 941.9 H938" stroke="#333" stroke-width="1.3"/>
<rect x="953.6" y="932.7" width="22.8" height="22.4" fill="none" stroke="#3c3c3c" stroke-width="1.3" stroke-dasharray="3.2 2.6"/>
<path d="M969.5 948.3 L975.7 953.8" stroke="#333" stroke-width="4.2" stroke-linecap="round"/>
<circle cx="962.7" cy="941.8" r="9" fill="url(#lens)" stroke="#3c3c3c" stroke-width="1.6"/>
<path d="M985.1 941.3 H994 L989.55 946.5Z" fill="#333"/>
<rect x="1003.6" y="932.6" width="22.7" height="18.3" rx="1.6" fill="#f4f4f4" stroke="#666" stroke-width="1.3"/>
<rect x="1006.6" y="935.6" width="16.5" height="11.8" rx="1.6" fill="#9db9df" stroke="#2c4a80" stroke-width="1.5"/>
<path d="M1012 951.2 H1018 L1019.5 953.3 H1010.5Z" fill="#dcdcdc" stroke="#777" stroke-width="0.8"/><rect x="1009.6" y="953.2" width="10.9" height="2.1" rx="0.8" fill="#f4f4f4" stroke="#666" stroke-width="0.9"/>
<path d="M1030.4 941.3 H1038.8 L1034.6 946.5Z" fill="#333"/>
<defs><linearGradient id="grd" x1="0" y1="0" x2="0" y2="1"><stop offset="0" stop-color="#6b6b6b"/><stop offset="1" stop-color="#7f8698"/></linearGradient></defs>
<rect x="1049.5" y="932.1" width="23.6" height="23.4" rx="1.5" fill="url(#grd)"/>
<rect x="1051.2" y="933.8" width="3.3" height="3.3" fill="rgb(255,255,255)"/>
<rect x="1055.6" y="933.8" width="3.3" height="3.3" fill="rgb(255,255,255)"/>
<rect x="1060" y="933.8" width="3.3" height="3.3" fill="rgb(255,255,255)"/>
<rect x="1064.4" y="933.8" width="3.3" height="3.3" fill="rgb(255,255,255)"/>
<rect x="1068.8" y="933.8" width="3.3" height="3.3" fill="rgb(255,255,255)"/>
<rect x="1051.2" y="938.2" width="3.3" height="3.3" fill="rgb(252,252,255)"/>
<rect x="1055.6" y="938.2" width="3.3" height="3.3" fill="rgb(252,252,255)"/>
<rect x="1060" y="938.2" width="3.3" height="3.3" fill="rgb(252,252,255)"/>
<rect x="1064.4" y="938.2" width="3.3" height="3.3" fill="rgb(252,252,255)"/>
<rect x="1068.8" y="938.2" width="3.3" height="3.3" fill="rgb(252,252,255)"/>
<rect x="1051.2" y="942.6" width="3.3" height="3.3" fill="rgb(238,238,246)"/>
<rect x="1055.6" y="942.6" width="3.3" height="3.3" fill="rgb(238,238,246)"/>
<rect x="1060" y="942.6" width="3.3" height="3.3" fill="rgb(238,238,246)"/>
<rect x="1064.4" y="942.6" width="3.3" height="3.3" fill="rgb(238,238,246)"/>
<rect x="1068.8" y="942.6" width="3.3" height="3.3" fill="rgb(238,238,246)"/>
<rect x="1051.2" y="947" width="3.3" height="3.3" fill="rgb(218,218,226)"/>
<rect x="1055.6" y="947" width="3.3" height="3.3" fill="rgb(218,218,226)"/>
<rect x="1060" y="947" width="3.3" height="3.3" fill="rgb(218,218,226)"/>
<rect x="1064.4" y="947" width="3.3" height="3.3" fill="rgb(218,218,226)"/>
<rect x="1068.8" y="947" width="3.3" height="3.3" fill="rgb(218,218,226)"/>
<rect x="1051.2" y="951.4" width="3.3" height="3.3" fill="rgb(198,198,206)"/>
<rect x="1055.6" y="951.4" width="3.3" height="3.3" fill="rgb(198,198,206)"/>
<rect x="1060" y="951.4" width="3.3" height="3.3" fill="rgb(198,198,206)"/>
<rect x="1064.4" y="951.4" width="3.3" height="3.3" fill="rgb(198,198,206)"/>
<rect x="1068.8" y="951.4" width="3.3" height="3.3" fill="rgb(198,198,206)"/>
<path d="M1076.8 941.3 H1085.1 L1080.95 946.5Z" fill="#333"/>
<rect x="1096.6" y="934.1" width="9.9" height="8.4" rx="1.5" fill="#8fb0dc" stroke="#2c4a80" stroke-width="1.3"/><rect x="1099.4" y="936.8" width="4.3" height="3" fill="#a8c4e6" stroke="#7699cc" stroke-width="0.6"/>
<rect x="1108" y="934.1" width="9.9" height="8.4" rx="1.5" fill="#8fb0dc" stroke="#2c4a80" stroke-width="1.3"/><rect x="1110.8" y="936.8" width="4.3" height="3" fill="#a8c4e6" stroke="#7699cc" stroke-width="0.6"/>
<rect x="1096.6" y="943.9" width="9.9" height="8.4" rx="1.5" fill="#8fb0dc" stroke="#2c4a80" stroke-width="1.3"/><rect x="1099.4" y="946.6" width="4.3" height="3" fill="#a8c4e6" stroke="#7699cc" stroke-width="0.6"/>
<rect x="1108" y="943.9" width="9.9" height="8.4" rx="1.5" fill="#8fb0dc" stroke="#2c4a80" stroke-width="1.3"/><rect x="1110.8" y="946.6" width="4.3" height="3" fill="#a8c4e6" stroke="#7699cc" stroke-width="0.6"/>
<path d="M1123.3 941.3 H1132 L1127.65 946.5Z" fill="#333"/></svg>
<div class="a" style="left:0px;top:968px;width:1920px;height:75px;background:#f2f2f2;"></div>
<div class="a" style="left:0px;top:968px;width:1920px;height:1.5px;background:#dcdcdc;"></div>
<div class="a" style="left:1850px;top:968px;width:70px;height:1.5px;background:#c9c9c9;"></div>
<svg class="a" style="left:0px;top:968px;" width="1920" height="75" viewBox="0 968 1920 75"><rect x="16.25" y="995.4" width="3.4" height="20.9" fill="#4c4c4e"/><polygon points="20,1005.85 34.7,996 34.7,1015.7" fill="#4c4c4e" />
<polygon points="52.9,1005.85 67.5,996 67.5,1015.7" fill="#4c4c4e" /><rect x="69" y="1001.5" width="3.2" height="8.6" fill="#4c4c4e"/>
<polygon points="91.5,994.2 109.2,1006 91.5,1017.8" fill="#4c4c4e" />
<rect x="127" y="1001.5" width="3.4" height="8.6" fill="#4c4c4e"/><polygon points="131.9,996 146.7,1005.85 131.9,1015.7" fill="#4c4c4e" />
<polygon points="166.25,996 181,1005.85 166.25,1015.7" fill="#4c4c4e" /><rect x="181.2" y="995.4" width="3.5" height="20.9" fill="#4c4c4e"/>
<rect x="231.2" y="1028.6" width="649" height="2.6" fill="#c8c8c8"/>
<rect x="231.3" y="1021.3" width="2.6" height="8" fill="#c8c8c8"/>
<rect x="267.22" y="1021.3" width="2.6" height="8" fill="#c8c8c8"/>
<rect x="303.14" y="1021.3" width="2.6" height="8" fill="#c8c8c8"/>
<rect x="339.06" y="1021.3" width="2.6" height="8" fill="#c8c8c8"/>
<rect x="374.98" y="1021.3" width="2.6" height="8" fill="#c8c8c8"/>
<rect x="410.9" y="1021.3" width="2.6" height="8" fill="#c8c8c8"/>
<rect x="446.82" y="1021.3" width="2.6" height="8" fill="#c8c8c8"/>
<rect x="482.74" y="1021.3" width="2.6" height="8" fill="#c8c8c8"/>
<rect x="518.66" y="1021.3" width="2.6" height="8" fill="#c8c8c8"/>
<rect x="554.58" y="1021.3" width="2.6" height="8" fill="#c8c8c8"/>
<rect x="590.5" y="1021.3" width="2.6" height="8" fill="#c8c8c8"/>
<rect x="626.42" y="1021.3" width="2.6" height="8" fill="#c8c8c8"/>
<rect x="662.34" y="1021.3" width="2.6" height="8" fill="#c8c8c8"/>
<rect x="698.26" y="1021.3" width="2.6" height="8" fill="#c8c8c8"/>
<rect x="734.18" y="1021.3" width="2.6" height="8" fill="#c8c8c8"/>
<rect x="770.1" y="1021.3" width="2.6" height="8" fill="#c8c8c8"/>
<rect x="806.02" y="1021.3" width="2.6" height="8" fill="#c8c8c8"/>
<rect x="841.94" y="1021.3" width="2.6" height="8" fill="#c8c8c8"/>
<rect x="877.86" y="1021.3" width="2.6" height="8" fill="#c8c8c8"/>
<path d="M888 983.6 H906.1 V989 L898.6 996.5 V1031 H895.3 V996.5 L888 989Z" fill="#666"/>
<g transform="translate(218.75 992.5)"><path d="M0.7 9.4 L6.6 3.4 H13 M20.7 12 V17.5 L15.3 23.4 H0.7 V9.4" fill="none" stroke="#666" stroke-width="1.5"/><path d="M1.5 9.7 L6.9 4.2 H19.5 V17.3 L14.9 22.6 H1.5Z" fill="#dcdcdc"/><path d="M1.5 9.7 L6.9 4.2 H19.5 L14.5 9.7Z" fill="#efefef"/><path d="M14.9 9.7 L19.9 4.4 V17.3 L14.9 22.6Z" fill="#cdcdcd"/><path d="M0.7 9.4 L6.6 3.4 H13 M20.7 12 V17.5 L15.3 23.4 H0.7 V9.4" fill="none" stroke="#666" stroke-width="1.5"/><polygon points="17.5,-0.5 18.76,3.45 22.45,1.55 20.55,5.24 24.5,6.5 20.55,7.76 22.45,11.45 18.76,9.55 17.5,13.5 16.24,9.55 12.55,11.45 14.45,7.76 10.5,6.5 14.45,5.24 12.55,1.55 16.24,3.45" fill="#f2f2f2" /><polygon points="17.5,0.3 18.53,4.01 21.88,2.12 19.99,5.47 23.7,6.5 19.99,7.53 21.88,10.88 18.53,8.99 17.5,12.7 16.47,8.99 13.12,10.88 15.01,7.53 11.3,6.5 15.01,5.47 13.12,2.12 16.47,4.01" fill="#ffa800" /></g>
<g transform="translate(254.50 992.5)"><g transform="translate(0 0)"><path d="M5.3 2.1 H17.8 M2.3 4.7 V17.5 M20.5 4.7 V10 M5.3 20 H10.9" fill="none" stroke="#666" stroke-width="1.6"/><rect x="0.3" y="0" width="3.1" height="3.1" fill="#1e90ea"/><rect x="20" y="0" width="3.1" height="3.1" fill="#1e90ea"/><rect x="0.3" y="19.4" width="3.1" height="3.1" fill="#1e90ea"/><g transform="translate(12.5 23.4) rotate(-43.5)"><path d="M0 0 L4 -2.3 V2.3Z" fill="#666"/><rect x="4" y="-2.3" width="9" height="4.6" fill="#ffc04d"/><path d="M13 -2.3 H14.5 Q16.8 -2.3 16.8 0 Q16.8 2.3 14.5 2.3 H13Z" fill="#ff4040"/></g></g></g>
<g transform="translate(291.05 992.5)"><polygon points="0,4.7 4.6,0 17.75,0 13.4,4.7" fill="#8ccbfb" /><polygon points="13.4,4.7 17.75,0 17.75,14.4 13.4,19.1" fill="#4994cd" /><polygon points="0,4.7 13.4,4.7 13.4,19.1 0,19.1" fill="#6ab0e5" /><polygon points="0,20.6 13.4,20.6 17.75,16 17.75,18.8 13.4,23.4 0,23.4" fill="#b4b4b4" /><path d="M21.5 3 V19.4" stroke="#333" stroke-width="1.6"/><path d="M18.9 4.6 L21.5 0.7 L24.1 4.6Z" fill="#333"/></g>
<g transform="translate(326.60 992.5)"><g transform="translate(0 0)"><path d="M5.3 2.1 H17.8 M2.3 4.7 V17.5 M20.5 4.7 V10 M5.3 20 H10.9" fill="none" stroke="#666" stroke-width="1.6"/><rect x="0.3" y="0" width="3.1" height="3.1" fill="#1e90ea"/><rect x="20" y="0" width="3.1" height="3.1" fill="#1e90ea"/><rect x="0.3" y="19.4" width="3.1" height="3.1" fill="#1e90ea"/><g transform="translate(12.5 23.4) rotate(-43.5)"><path d="M0 0 L4 -2.3 V2.3Z" fill="#666"/><rect x="4" y="-2.3" width="9" height="4.6" fill="#ffc04d"/><path d="M13 -2.3 H14.5 Q16.8 -2.3 16.8 0 Q16.8 2.3 14.5 2.3 H13Z" fill="#ff4040"/></g></g></g>
<g transform="translate(363.15 992.5)"><polygon points="0,4.7 4.6,0 17.75,0 13.4,4.7" fill="#8ccbfb" /><polygon points="13.4,4.7 17.75,0 17.75,14.4 13.4,19.1" fill="#4994cd" /><polygon points="0,4.7 13.4,4.7 13.4,19.1 0,19.1" fill="#6ab0e5" /><polygon points="0,20.6 13.4,20.6 17.75,16 17.75,18.8 13.4,23.4 0,23.4" fill="#b4b4b4" /><path d="M21.5 3 V19.4" stroke="#333" stroke-width="1.6"/><path d="M18.9 4.6 L21.5 0.7 L24.1 4.6Z" fill="#333"/></g>
<g transform="translate(399.40 992.5)"><path d="M1.2 6.2 H9 Q17.4 6.5 17.4 15 V22.6 H1.2Z" fill="#dcdcdc"/><polygon points="17.6,15 22.6,10.5 22.6,17.4 17.6,22.8" fill="#c4c4c4" /><path d="M9.8 3.6 L13.7 -0.3 Q22.5 1 23.7 9.7 L20 13.2 Q19 5 9.8 3.6Z" fill="#62a9df"/><path d="M10.3 0.5 H5 L0.1 5.1 V23.4 H18.3 L23.3 17.7 V12" fill="none" stroke="#666" stroke-width="1.5"/></g>
<g transform="translate(434.75 992.5)"><g transform="translate(0 0)"><path d="M5.3 2.1 H17.8 M2.3 4.7 V17.5 M20.5 4.7 V10 M5.3 20 H10.9" fill="none" stroke="#666" stroke-width="1.6"/><rect x="0.3" y="0" width="3.1" height="3.1" fill="#1e90ea"/><rect x="20" y="0" width="3.1" height="3.1" fill="#1e90ea"/><rect x="0.3" y="19.4" width="3.1" height="3.1" fill="#1e90ea"/><g transform="translate(12.5 23.4) rotate(-43.5)"><path d="M0 0 L4 -2.3 V2.3Z" fill="#666"/><rect x="4" y="-2.3" width="9" height="4.6" fill="#ffc04d"/><path d="M13 -2.3 H14.5 Q16.8 -2.3 16.8 0 Q16.8 2.3 14.5 2.3 H13Z" fill="#ff4040"/></g></g></g>
<g transform="translate(471.30 992.5)"><polygon points="0,4.7 4.6,0 17.75,0 13.4,4.7" fill="#8ccbfb" /><polygon points="13.4,4.7 17.75,0 17.75,14.4 13.4,19.1" fill="#4994cd" /><polygon points="0,4.7 13.4,4.7 13.4,19.1 0,19.1" fill="#6ab0e5" /><polygon points="0,20.6 13.4,20.6 17.75,16 17.75,18.8 13.4,23.4 0,23.4" fill="#b4b4b4" /><path d="M21.5 3 V19.4" stroke="#333" stroke-width="1.6"/><path d="M18.9 4.6 L21.5 0.7 L24.1 4.6Z" fill="#333"/></g>
<g transform="translate(506.85 992.5)"><g transform="translate(0 0)"><path d="M5.3 2.1 H17.8 M2.3 4.7 V17.5 M20.5 4.7 V10 M5.3 20 H10.9" fill="none" stroke="#666" stroke-width="1.6"/><rect x="0.3" y="0" width="3.1" height="3.1" fill="#1e90ea"/><rect x="20" y="0" width="3.1" height="3.1" fill="#1e90ea"/><rect x="0.3" y="19.4" width="3.1" height="3.1" fill="#1e90ea"/><g transform="translate(12.5 23.4) rotate(-43.5)"><path d="M0 0 L4 -2.3 V2.3Z" fill="#666"/><rect x="4" y="-2.3" width="9" height="4.6" fill="#ffc04d"/><path d="M13 -2.3 H14.5 Q16.8 -2.3 16.8 0 Q16.8 2.3 14.5 2.3 H13Z" fill="#ff4040"/></g></g></g>
<g transform="translate(543.40 992.5)"><polygon points="0,4.7 4.6,0 17.75,0 13.4,4.7" fill="#8ccbfb" /><polygon points="13.4,4.7 17.75,0 17.75,14.4 13.4,19.1" fill="#4994cd" /><polygon points="0,4.7 13.4,4.7 13.4,19.1 0,19.1" fill="#6ab0e5" /><polygon points="0,20.6 13.4,20.6 17.75,16 17.75,18.8 13.4,23.4 0,23.4" fill="#b4b4b4" /><path d="M21.5 3 V19.4" stroke="#333" stroke-width="1.6"/><path d="M18.9 4.6 L21.5 0.7 L24.1 4.6Z" fill="#333"/></g>
<g transform="translate(578.95 992.5)"><g transform="translate(0 0)"><path d="M5.3 2.1 H17.8 M2.3 4.7 V17.5 M20.5 4.7 V10 M5.3 20 H10.9" fill="none" stroke="#666" stroke-width="1.6"/><rect x="0.3" y="0" width="3.1" height="3.1" fill="#1e90ea"/><rect x="20" y="0" width="3.1" height="3.1" fill="#1e90ea"/><rect x="0.3" y="19.4" width="3.1" height="3.1" fill="#1e90ea"/><g transform="translate(12.5 23.4) rotate(-43.5)"><path d="M0 0 L4 -2.3 V2.3Z" fill="#666"/><rect x="4" y="-2.3" width="9" height="4.6" fill="#ffc04d"/><path d="M13 -2.3 H14.5 Q16.8 -2.3 16.8 0 Q16.8 2.3 14.5 2.3 H13Z" fill="#ff4040"/></g></g></g>
<g transform="translate(615.50 992.5)"><polygon points="0,4.7 4.6,0 17.75,0 13.4,4.7" fill="#8ccbfb" /><polygon points="13.4,4.7 17.75,0 17.75,14.4 13.4,19.1" fill="#4994cd" /><polygon points="0,4.7 13.4,4.7 13.4,19.1 0,19.1" fill="#6ab0e5" /><polygon points="0,20.6 13.4,20.6 17.75,16 17.75,18.8 13.4,23.4 0,23.4" fill="#b4b4b4" /><path d="M21.5 3 V19.4" stroke="#333" stroke-width="1.6"/><path d="M18.9 4.6 L21.5 0.7 L24.1 4.6Z" fill="#333"/></g>
<g transform="translate(651.75 992.5)"><path d="M1.2 6.2 H9 Q17.4 6.5 17.4 15 V22.6 H1.2Z" fill="#dcdcdc"/><polygon points="17.6,15 22.6,10.5 22.6,17.4 17.6,22.8" fill="#c4c4c4" /><path d="M9.8 3.6 L13.7 -0.3 Q22.5 1 23.7 9.7 L20 13.2 Q19 5 9.8 3.6Z" fill="#62a9df"/><path d="M10.3 0.5 H5 L0.1 5.1 V23.4 H18.3 L23.3 17.7 V12" fill="none" stroke="#666" stroke-width="1.5"/></g>
<g transform="translate(687.80 992.5)"><path d="M1.2 6.2 H9 Q17.4 6.5 17.4 15 V22.6 H1.2Z" fill="#dcdcdc"/><polygon points="17.6,15 22.6,10.5 22.6,17.4 17.6,22.8" fill="#c4c4c4" /><path d="M9.8 3.6 L13.7 -0.3 Q22.5 1 23.7 9.7 L20 13.2 Q19 5 9.8 3.6Z" fill="#62a9df"/><path d="M10.3 0.5 H5 L0.1 5.1 V23.4 H18.3 L23.3 17.7 V12" fill="none" stroke="#666" stroke-width="1.5"/></g>
<g transform="translate(723.85 992.5)"><path d="M1.2 6.2 H9 Q17.4 6.5 17.4 15 V22.6 H1.2Z" fill="#dcdcdc"/><polygon points="17.6,15 22.6,10.5 22.6,17.4 17.6,22.8" fill="#c4c4c4" /><path d="M9.8 3.6 L13.7 -0.3 Q22.5 1 23.7 9.7 L20 13.2 Q19 5 9.8 3.6Z" fill="#62a9df"/><path d="M10.3 0.5 H5 L0.1 5.1 V23.4 H18.3 L23.3 17.7 V12" fill="none" stroke="#666" stroke-width="1.5"/></g>
<g transform="translate(759.20 992.5)"><g transform="translate(0 0)"><path d="M5.3 2.1 H17.8 M2.3 4.7 V17.5 M20.5 4.7 V10 M5.3 20 H10.9" fill="none" stroke="#666" stroke-width="1.6"/><rect x="0.3" y="0" width="3.1" height="3.1" fill="#1e90ea"/><rect x="20" y="0" width="3.1" height="3.1" fill="#1e90ea"/><rect x="0.3" y="19.4" width="3.1" height="3.1" fill="#1e90ea"/><g transform="translate(12.5 23.4) rotate(-43.5)"><path d="M0 0 L4 -2.3 V2.3Z" fill="#666"/><rect x="4" y="-2.3" width="9" height="4.6" fill="#ffc04d"/><path d="M13 -2.3 H14.5 Q16.8 -2.3 16.8 0 Q16.8 2.3 14.5 2.3 H13Z" fill="#ff4040"/></g></g></g>
<g transform="translate(795.75 992.5)"><polygon points="0,4.7 4.6,0 17.75,0 13.4,4.7" fill="#8ccbfb" /><polygon points="13.4,4.7 17.75,0 17.75,14.4 13.4,19.1" fill="#4994cd" /><polygon points="0,4.7 13.4,4.7 13.4,19.1 0,19.1" fill="#6ab0e5" /><polygon points="0,20.6 13.4,20.6 17.75,16 17.75,18.8 13.4,23.4 0,23.4" fill="#b4b4b4" /><path d="M21.5 3 V19.4" stroke="#333" stroke-width="1.6"/><path d="M18.9 4.6 L21.5 0.7 L24.1 4.6Z" fill="#333"/></g>
<g transform="translate(831.60 992.5)"><path d="M12.9 0.3 H18.4 L23.4 4.7 V23.3 H5.1 L0.4 18.6 V13.5Z" fill="#f6f6f6"/><polygon points="6.2,17.5 21.8,6.4 21.8,22 6.2,22" fill="#dcdcdc" /><path d="M12.9 0.3 H18.4 L23.4 4.7 V23.3 H5.1 L0.4 18.6 V13.5" fill="none" stroke="#666" stroke-width="1.5"/><polygon points="0.9,10 9.6,0.3 15.1,5.3 5.9,15.3" fill="#6ab0e5" /></g>
<g transform="translate(867.05 992.5)"><circle cx="3.4" cy="7.4" r="2.3" fill="none" stroke="#666" stroke-width="1.1"/><circle cx="10.9" cy="2.8" r="2.9" fill="#62a9df"/><circle cx="18.4" cy="7.4" r="2.9" fill="#62a9df"/><circle cx="18.4" cy="16.4" r="2.9" fill="#62a9df"/><circle cx="10.9" cy="20.8" r="2.9" fill="#62a9df"/><circle cx="3.4" cy="16.4" r="2.9" fill="#62a9df"/></g></svg>
<svg class="a" style="left:1876.3px;top:993.5px;" width="24.4" height="24.4" viewBox="0 0 24 24"><g transform="translate(12 12)" fill="#9a9a9a"><circle r="8.6"/><rect x="-2.6" y="-12" width="5.2" height="6" transform="rotate(0)"/><rect x="-2.6" y="-12" width="5.2" height="6" transform="rotate(45)"/><rect x="-2.6" y="-12" width="5.2" height="6" transform="rotate(90)"/><rect x="-2.6" y="-12" width="5.2" height="6" transform="rotate(135)"/><rect x="-2.6" y="-12" width="5.2" height="6" transform="rotate(180)"/><rect x="-2.6" y="-12" width="5.2" height="6" transform="rotate(225)"/><rect x="-2.6" y="-12" width="5.2" height="6" transform="rotate(270)"/><rect x="-2.6" y="-12" width="5.2" height="6" transform="rotate(315)"/><circle r="3.7" fill="#f2f2f2"/></g></svg>
<div class="a" style="left:0px;top:1043px;width:1920px;height:35px;background:#f2f2f2;"></div>
<div class="a" style="left:0px;top:1043px;width:1920px;height:1.5px;background:#c9c9c9;"></div>
<div class="a" style="left:0px;top:1043px;width:1.2px;height:35px;background:#c9c9c9;"></div>
<div class="a" style="left:1918.6px;top:1043px;width:1.4px;height:35px;background:#c9c9c9;"></div>
<div class="a" style="left:0px;top:1077px;width:1920px;height:1px;background:#fff;"></div>
<div class="a" style="left:0px;top:1078px;width:1920px;height:2px;background:#1a1a1a;"></div>
<span class="t" style="left:37.70px;top:1053.76px;font-size:16px;line-height:16px;color:#5c5c5c;transform:scaleX(0.9390);">TEXT COMMANDS</span>
<svg class="a" style="left:8.7px;top:1055.3px;" width="14" height="14" viewBox="0 0 14 14"><circle cx="7" cy="7" r="7" fill="#262626"/><path d="M3 7H11M7 3V11" stroke="#fff" stroke-width="2"/></svg>
<svg class="a" style="left:1790px;top:225px;" width="130" height="125" viewBox="1790 225 130 125"><defs><filter id="vb" x="-30%" y="-30%" width="160%" height="160%"><feGaussianBlur stdDeviation="5"/></filter><filter id="vb1"><feGaussianBlur stdDeviation="0.6"/></filter></defs>
<path d="M1822 306 L1864 322 L1890 294 L1850 282Z" fill="#000" opacity="0.28" filter="url(#vb)" transform="translate(2,6)"/>
<polygon points="1814.3,261.5 1842.6,237.5 1887.1,251.3 1863,277.8" fill="#f1f1f1"/>
<polygon points="1814.3,261.5 1863,277.8 1861.3,318.7 1818,303" fill="#ebebeb"/>
<polygon points="1863,277.8 1887.1,251.3 1883.5,291.6 1861.3,318.7" fill="#e4e4e4"/>
<g filter="url(#vb1)"><path d="M1814.3 261.5 L1842.6 237.5 L1887.1 251.3 L1863 277.8 Z M1863 277.8 L1861.3 318.7 M1887.1 251.3 L1883.5 291.6" fill="none" stroke="#606060" stroke-width="1" stroke-dasharray="7 4.5"/></g>
<g filter="url(#vb1)"><path d="M1812.5 255 L1818 303" stroke="#5b5bf0" stroke-width="3.2"/><path d="M1818 303 L1869 324.7" stroke="#f28a8a" stroke-width="3"/></g>
<g filter="url(#vb1)" font-family="Liberation Sans, sans-serif"><text x="1806.3" y="252" font-size="14.5" fill="#7a7af5" font-weight="700">Z</text><text x="1871.5" y="333" font-size="14" fill="#f59a9a" font-weight="700">X</text><text transform="matrix(0.85 0.32 0.04 1 1822.7 289.6)" font-size="10.8" fill="#8a8a8a">FRONT</text><text transform="matrix(0.9 0.28 -0.7 0.62 1842.5 253.5)" font-size="9.5" fill="#8f8f8f">TOP</text><text transform="matrix(0.56 -0.52 0 1 1867.3 297.5)" font-size="9.5" fill="#8f8f8f">RIGHT</text></g>
<circle cx="1859" cy="277" r="6" fill="#dfe3ea" opacity="0.7"/></svg>
</body></html>
